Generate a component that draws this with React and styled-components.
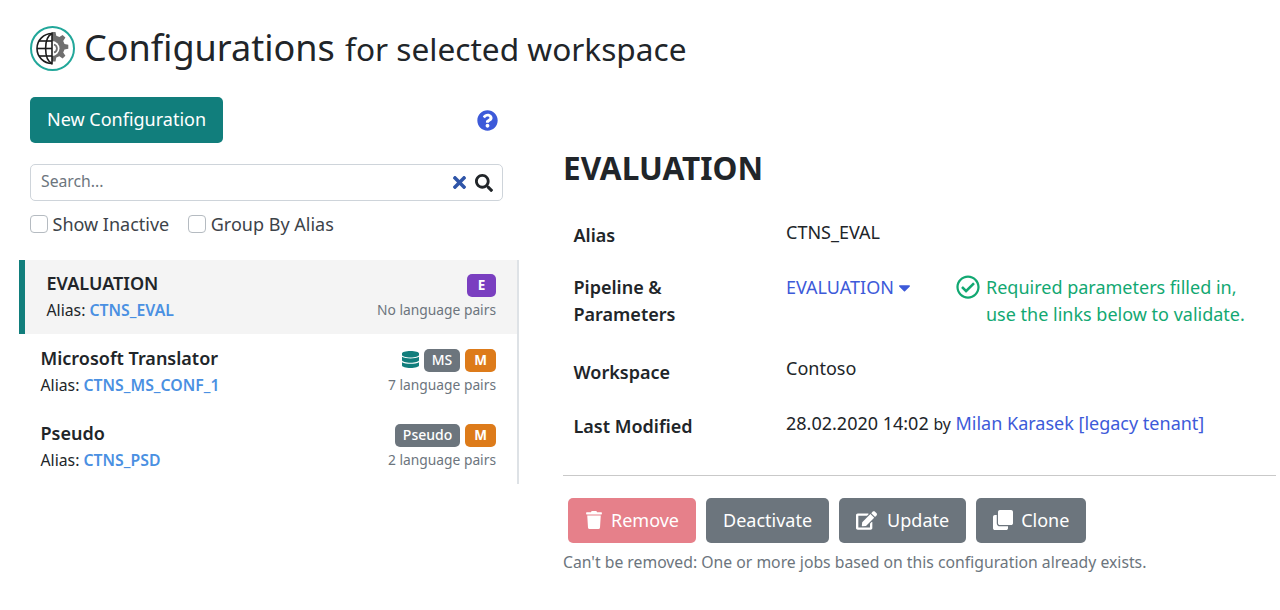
import React from "react";
import styled, { createGlobalStyle } from "styled-components";
import {
  FaCaretDown,
  FaClone,
  FaDatabase,
  FaEdit,
  FaQuestionCircle,
  FaRegCheckCircle,
  FaSearch,
  FaTimes,
  FaTrash,
} from "react-icons/fa";

const colors = {
  text: "#212529",
  teal: "#117e7c",
  gray: "#6c757d",
  blue: "#4a90e2",
  link: "#3d5ad9",
  green: "#12a872",
  orange: "#dd7b1a",
  purple: "#7a3fc0",
  red: "#e6808a",
};

const GlobalStyle = createGlobalStyle`
  html, body {
    margin: 0;
    background: #fff;
    color: ${colors.text};
    font-family: "Noto Sans", sans-serif;
    font-size: 18px;
  }
`;

const configurations = [
  {
    name: "EVALUATION",
    alias: "CTNS_EVAL",
    pairs: "No language pairs",
    badges: [{ label: "E", color: colors.purple }],
    active: true,
  },
  {
    name: "Microsoft Translator",
    alias: "CTNS_MS_CONF_1",
    pairs: "7 language pairs",
    database: true,
    badges: [
      { label: "MS", color: colors.gray, light: true },
      { label: "M", color: colors.orange },
    ],
  },
  {
    name: "Pseudo",
    alias: "CTNS_PSD",
    pairs: "2 language pairs",
    badges: [
      { label: "Pseudo", color: colors.gray, light: true },
      { label: "M", color: colors.orange },
    ],
  },
];

function Logo() {
  return (
    <LogoRing>
      <svg width="41" height="41" viewBox="0 0 41 41">
        <path
          fill="#6f6f6f"
          d="M20 4h3.500l.8 3.800 3.100 1.300 3.200-2.200 2.800 2.700-2.200 3.300 1.300 3 3.800.8v4l-3.800.8-1.300 3 2.200 3.300-2.800 2.700-3.200-2.200-3.100 1.300-.8 3.800H20z"
        />
        <path d="M20 13a7.500 7.500 0 0 1 0 15z" fill="#fff" />
        <path d="M22 16.500a4.200 4.200 0 0 1 0 8" fill="none" stroke="#6f6f6f" strokeWidth="1.800" />
        <g fill="none" stroke="#1c1c1c" strokeWidth="1.600">
          <path d="M20 5.500a15 15 0 0 0 0 30" />
          <path d="M20 5.500c-8.500 4-8.500 26 0 30" />
          <path d="M20 4.500v32" />
          <path d="M5 20.500h15" />
          <path d="M7 13h13" />
          <path d="M7 28h13" />
        </g>
      </svg>
    </LogoRing>
  );
}

function ConfigItem({ item }) {
  return (
    <Item $active={item.active}>
      <ItemMain>
        <ItemName>{item.name}</ItemName>
        <ItemAlias>
          Alias: <AliasCode>{item.alias}</AliasCode>
        </ItemAlias>
      </ItemMain>
      <ItemMeta>
        <Badges>
          {item.database && <DatabaseIcon preserveAspectRatio="none" />}
          {item.badges.map((badge) => (
            <Badge key={badge.label} $color={badge.color} $light={badge.light}>
              {badge.label}
            </Badge>
          ))}
        </Badges>
        <Pairs>{item.pairs}</Pairs>
      </ItemMeta>
    </Item>
  );
}

export default function App() {
  return (
    <Page>
      <GlobalStyle />
      <Header>
        <Logo />
        <Title>
          Configurations <small>for selected workspace</small>
        </Title>
      </Header>
      <Columns>
        <Sidebar>
          <Toolbar>
            <PrimaryButton>New Configuration</PrimaryButton>
            <FaQuestionCircle size={21} color={colors.link} />
          </Toolbar>
          <SearchBox>
            <SearchInput placeholder="Search..." readOnly />
            <FaTimes size={19} color="#2f55a8" />
            <FaSearch size={18} color={colors.text} />
          </SearchBox>
          <Filters>
            <Check>
              <CheckBox />
              Show Inactive
            </Check>
            <Check>
              <CheckBox />
              Group By Alias
            </Check>
          </Filters>
          <List>
            {configurations.map((item) => (
              <ConfigItem key={item.name} item={item} />
            ))}
          </List>
        </Sidebar>
        <Detail>
          <DetailTitle>EVALUATION</DetailTitle>
          <Fields>
            <Label $top={12}>Alias</Label>
            <Value $top={9}>CTNS_EVAL</Value>
            <Label $top={25}>Pipeline &amp; Parameters</Label>
            <PipelineValue>
              <PipelineLink>
                EVALUATION <FaCaretDown size={19} />
              </PipelineLink>
              <Status>
                <FaRegCheckCircle size={24} />
                <span>
                  Required parameters filled in,
                  <br />
                  use the links below to validate.
                </span>
              </Status>
            </PipelineValue>
            <Label $top={31}>Workspace</Label>
            <Value $top={27}>Contoso</Value>
            <Label $top={27}>Last Modified</Label>
            <Value $top={24}>
              28.02.2020 14:02 <By>by</By> <Link>Milan Karasek [legacy tenant]</Link>
            </Value>
          </Fields>
          <Divider />
          <Actions>
            <ActionButton $color={colors.red}>
              <FaTrash size={18} />
              Remove
            </ActionButton>
            <ActionButton>Deactivate</ActionButton>
            <ActionButton $gap={10}>
              <FaEdit size={21} />
              Update
            </ActionButton>
            <ActionButton>
              <FaClone size={20} />
              Clone
            </ActionButton>
          </Actions>
          <Note>Can't be removed: One or more jobs based on this configuration already exists.</Note>
        </Detail>
      </Columns>
    </Page>
  );
}

const Page = styled.div`
  width: 1280px;
  height: 610px;
  overflow: hidden;
  box-sizing: border-box;
  padding-top: 26px;
`;

const Header = styled.header`
  display: flex;
  align-items: center;
  gap: 9px;
  padding-left: 30px;
  height: 45px;
`;

const LogoRing = styled.div`
  width: 45px;
  height: 45px;
  box-sizing: border-box;
  border: 2px solid #22a79a;
  border-radius: 50%;
  display: flex;
  align-items: center;
  justify-content: center;
  flex: none;
`;

const Title = styled.h1`
  margin: 0;
  font-size: 36px;
  font-weight: 400;
  line-height: 45px;
  white-space: nowrap;
  padding-bottom: 1px;

  small {
    font-size: 31.6px;
    margin-left: 1px;
  }
`;

const Columns = styled.div`
  display: flex;
  margin-top: 26px;
`;

const Sidebar = styled.aside`
  width: 500px;
  margin-left: 19px;
  flex: none;
`;

const Toolbar = styled.div`
  display: flex;
  align-items: center;
  justify-content: space-between;
  padding: 0 21px 0 11px;
`;

const Button = styled.button`
  border: none;
  border-radius: 5px;
  color: #fff;
  font-family: inherit;
  font-size: 18px;
  height: 46px;
  padding: 0 17px 3px;
  display: flex;
  align-items: center;
  white-space: nowrap;
`;

const PrimaryButton = styled(Button)`
  background: ${colors.teal};
`;

const SearchBox = styled.div`
  margin: 21px 16px 0 11px;
  height: 37px;
  box-sizing: border-box;
  border: 1px solid #ced4da;
  border-radius: 5px;
  display: flex;
  align-items: center;
  gap: 6px;
  padding: 0 9px 0 10px;
`;

const SearchInput = styled.input`
  flex: 1;
  min-width: 0;
  border: none;
  outline: none;
  padding: 0 0 3px;
  font-family: inherit;
  font-size: 15.75px;

  &::placeholder {
    color: ${colors.gray};
    opacity: 1;
  }
`;

const Filters = styled.div`
  display: flex;
  gap: 19px;
  margin: 11px 0 0 11px;
  height: 24px;
  align-items: center;
`;

const Check = styled.label`
  display: flex;
  align-items: center;
  gap: 4.500px;
  color: #3d4349;
  font-size: 18px;
`;

const CheckBox = styled.span`
  width: 18px;
  height: 18px;
  box-sizing: border-box;
  border: 1px solid #b5bbc1;
  border-radius: 4px;
`;

const List = styled.div`
  margin-top: 24px;
  border-right: 2px solid #dee2e6;
`;

const Item = styled.div`
  display: flex;
  justify-content: space-between;
  height: ${(p) => (p.$active ? 74 : 75)}px;
  box-sizing: border-box;
  padding: ${(p) => (p.$active ? 10 : 11)}px 21px 0 ${(p) => (p.$active ? 21.5 : 15.5)}px;
  background: ${(p) => (p.$active ? "#f4f4f4" : "transparent")};
  border-left: 6px solid ${(p) => (p.$active ? colors.teal : "transparent")};
`;

const ItemMain = styled.div`
  display: flex;
  flex-direction: column;
`;

const ItemName = styled.div`
  font-size: 18px;
  font-weight: 600;
  line-height: 26px;
`;

const ItemAlias = styled.div`
  font-size: 15.8px;
  line-height: 26px;
  margin-top: 1px;
`;

const AliasCode = styled.span`
  color: ${colors.blue};
  font-weight: 600;
`;

const ItemMeta = styled.div`
  display: flex;
  flex-direction: column;
  align-items: flex-end;
`;

const Badges = styled.div`
  display: flex;
  align-items: flex-start;
  gap: 5px;
  height: 27px;
  padding-top: 4px;
  box-sizing: border-box;
`;

const DatabaseIcon = styled(FaDatabase)`
  width: 17px;
  height: 17px;
  margin-top: 2px;
  color: ${colors.teal};
`;

const Badge = styled.span`
  background: ${(p) => p.$color};
  color: #fff;
  border-radius: 5px;
  height: 23px;
  min-width: 29px;
  box-sizing: border-box;
  padding: 0 ${(p) => (p.$light ? 8 : 9)}px 2px;
  display: flex;
  align-items: center;
  justify-content: center;
  font-size: ${(p) => (p.$light ? 14 : 13.5)}px;
  font-weight: ${(p) => (p.$light ? 500 : 700)};
`;

const Pairs = styled.div`
  color: ${colors.gray};
  font-size: 13.8px;
  line-height: 26px;
`;

const Detail = styled.main`
  margin-left: 44px;
  width: 713px;
  flex: none;
`;

const DetailTitle = styled.h2`
  margin: 0;
  padding-top: 49px;
  font-size: 31.5px;
  font-weight: 700;
  line-height: 44px;
`;

const Fields = styled.div`
  display: grid;
  grid-template-columns: 212.5px 1fr;
  padding-left: 10.5px;
  margin-top: 20px;
  line-height: 27px;
`;

const Label = styled.div`
  font-weight: 600;
  padding-top: ${(p) => p.$top}px;
  padding-right: 90px;
`;

const Value = styled.div`
  padding-top: ${(p) => p.$top}px;
`;

const PipelineValue = styled.div`
  display: flex;
  padding-top: 25px;
`;

const PipelineLink = styled.div`
  width: 170px;
  color: ${colors.link};
  flex: none;

  svg {
    vertical-align: -3px;
    margin-left: -4px;
  }
`;

const Status = styled.div`
  display: flex;
  gap: 6px;
  color: ${colors.green};

  svg {
    margin-top: 1px;
    flex: none;
  }
`;

const By = styled.span`
  font-size: 15.75px;
`;

const Link = styled.span`
  color: ${colors.link};
`;

const Divider = styled.hr`
  margin: 35px 0 0;
  border: none;
  border-top: 1px solid #c9c9c9;
`;

const Actions = styled.div`
  display: flex;
  gap: 10px;
  margin: 22px 0 0 5px;
`;

const ActionButton = styled(Button)`
  background: ${(p) => p.$color || colors.gray};
  gap: ${(p) => p.$gap || 8}px;
  height: 45px;
  padding-bottom: 1px;
`;

const Note = styled.div`
  color: ${colors.gray};
  font-size: 15.75px;
  margin-top: 8px;
  line-height: 22px;
`;
